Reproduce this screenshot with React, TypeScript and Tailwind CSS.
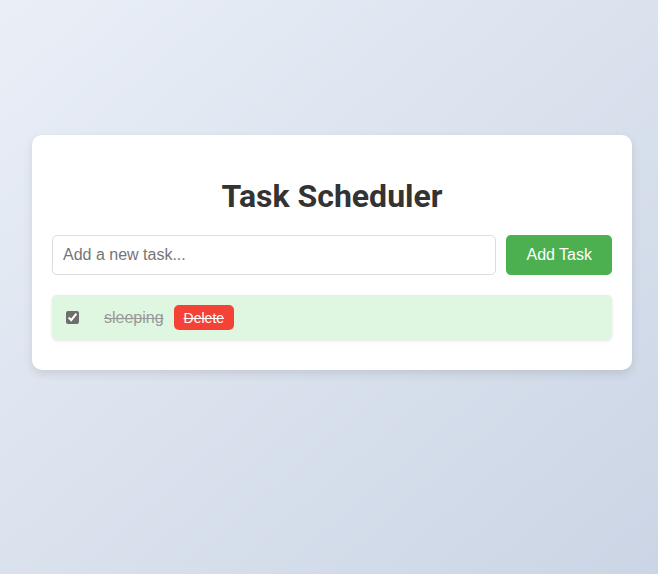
import React, { useState } from "react";

type Task = { id: number; text: string; done: boolean };

export default function App() {
  const [tasks, setTasks] = useState<Task[]>([{ id: 1, text: "sleeping", done: true }]);
  const [value, setValue] = useState("");

  const addTask = () => {
    if (!value.trim()) return;
    setTasks([...tasks, { id: Date.now(), text: value.trim(), done: false }]);
    setValue("");
  };

  return (
    <div
      className="min-h-screen bg-gradient-to-br from-[#eaeff7] to-[#cbd5e5] pt-[135px] pl-[32px]"
      style={{ fontFamily: '"Liberation Sans", Arial, sans-serif' }}
    >
      <div className="w-[600px] rounded-[10px] bg-white p-5 shadow-[0_4px_10px_rgba(0,0,0,0.1)]">
        {/* header */}
        <h1
          className="mt-[23px] mb-[20px] text-center text-[32px] font-bold leading-[37px] text-[#333]"
          style={{ fontFamily: "Roboto, Arial, sans-serif" }}
        >
          Task Scheduler
        </h1>

        {/* input row */}
        <div className="flex gap-[10px]">
          <input
            value={value}
            onChange={(e) => setValue(e.target.value)}
            placeholder="Add a new task..."
            className="h-10 flex-1 rounded-[5px] border border-[#ddd] px-[10px] text-base text-[#333] outline-none placeholder:text-[#757575]"
          />
          <button
            onClick={addTask}
            className="h-10 rounded-[5px] bg-[#4caf50] px-5 text-base text-white"
          >
            Add Task
          </button>
        </div>

        {/* task list */}
        <ul className="mt-5">
          {tasks.map((t) => (
            <li
              key={t.id}
              className={`mb-[10px] flex items-center rounded-[5px] px-[10px] py-[10px] shadow-[0_1px_3px_rgba(0,0,0,0.1)] ${
                t.done ? "bg-[#dff6e0] text-[#999] line-through" : "bg-[#f9f9f9] text-[#333]"
              }`}
            >
              <input
                type="checkbox"
                checked={t.done}
                onChange={() =>
                  setTasks(tasks.map((x) => (x.id === t.id ? { ...x, done: !x.done } : x)))
                }
                className="ml-1 h-[13px] w-[13px] accent-[#6e6e6e]"
              />
              <span className="ml-[25px] text-base">{t.text}</span>
              <button
                onClick={() => setTasks(tasks.filter((x) => x.id !== t.id))}
                className="ml-[10px] h-[25px] rounded-[5px] bg-[#f44336] px-[10px] text-sm text-white line-through"
              >
                Delete
              </button>
            </li>
          ))}
        </ul>
      </div>
    </div>
  );
}
